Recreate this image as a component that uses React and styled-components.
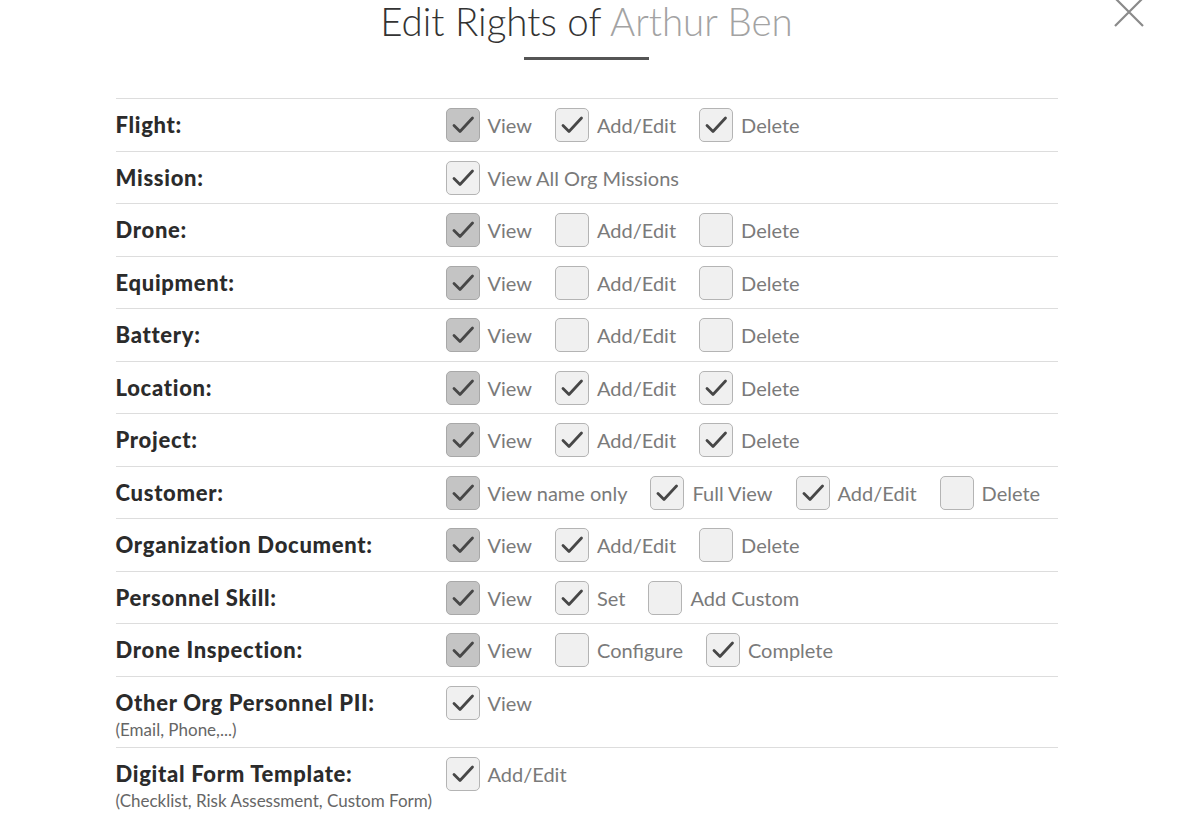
import React, {useLayoutEffect} from 'react';
import styled, {createGlobalStyle} from 'styled-components';

const GlobalStyle = createGlobalStyle`
	html, body {
		margin: 0;
		padding: 0;
		background: #fff;
		font-family: Lato, "Open Sans", sans-serif;
	}
`

const rights = [
	{label: 'Flight:', options: [['View', 'locked'], ['Add/Edit', 'on'], ['Delete', 'on']]},
	{label: 'Mission:', options: [['View All Org Missions', 'on']]},
	{label: 'Drone:', options: [['View', 'locked'], ['Add/Edit', 'off'], ['Delete', 'off']]},
	{label: 'Equipment:', options: [['View', 'locked'], ['Add/Edit', 'off'], ['Delete', 'off']]},
	{label: 'Battery:', options: [['View', 'locked'], ['Add/Edit', 'off'], ['Delete', 'off']]},
	{label: 'Location:', options: [['View', 'locked'], ['Add/Edit', 'on'], ['Delete', 'on']]},
	{label: 'Project:', options: [['View', 'locked'], ['Add/Edit', 'on'], ['Delete', 'on']]},
	{label: 'Customer:', options: [['View name only', 'locked'], ['Full View', 'on'], ['Add/Edit', 'on'], ['Delete', 'off']]},
	{label: 'Organization Document:', options: [['View', 'locked'], ['Add/Edit', 'on'], ['Delete', 'off']]},
	{label: 'Personnel Skill:', options: [['View', 'locked'], ['Set', 'on'], ['Add Custom', 'off']]},
	{label: 'Drone Inspection:', options: [['View', 'locked'], ['Configure', 'off'], ['Complete', 'on']]},
	{label: 'Other Org Personnel PII:', note: '(Email, Phone,...)', options: [['View', 'on']]},
	{label: 'Digital Form Template:', note: '(Checklist, Risk Assessment, Custom Form)', options: [['Add/Edit', 'on']]},
]

function Check({state}) {
	return (
		<Box state={state}>
			{state !== 'off' && (
				<svg width="28" height="28" viewBox="0 0 28 28">
					<path d="M5 14.5 L11 20.5 L23.5 7" fill="none" stroke="#474747" strokeWidth="2.8" strokeLinecap="round" strokeLinejoin="round" />
				</svg>
			)}
		</Box>
	)
}

function App() {
	useLayoutEffect(() => {
		window.scrollTo(0, 21);
	}, []);

	return (
		<Page>
			<GlobalStyle />
			<Close aria-label="close">
				<svg width="32" height="32" viewBox="0 0 32 32">
					<path d="M2 2 L30 30 M30 2 L2 30" stroke="#8a8a8a" strokeWidth="2.2" />
				</svg>
			</Close>
			<Title>Edit Rights of <Name>Arthur Ben</Name></Title>
			<Underline />
			<Table>
				{rights.map((r) => (
					<Row key={r.label}>
						<LabelCol>
							<Label>{r.label}</Label>
							{r.note && <Note>{r.note}</Note>}
						</LabelCol>
						<Options>
							{r.options.map(([text, state]) => (
								<Option key={text}>
									<Check state={state} />
									<span>{text}</span>
								</Option>
							))}
						</Options>
					</Row>
				))}
			</Table>
		</Page>
	)
}

export default App

const Page = styled.div`
	position: relative;
	min-height: 1061px;
	box-sizing: border-box;
	padding: 19px 21px 0 0;
	display: flex;
	flex-direction: column;
	align-items: center;
`

const Close = styled.div`
	position: absolute;
	top: 17px;
	right: 49px;
	cursor: pointer;
	line-height: 0;
`

const Title = styled.h1`
	margin: 0;
	font-family: Lato, sans-serif;
	font-weight: 300;
	font-size: 38.5px;
	line-height: 46px;
	color: #333;
`

const Name = styled.span`
	color: #a3a3a3;
`

const Underline = styled.div`
	width: 125px;
	height: 3px;
	background: #555;
	margin-top: 13px;
	margin-bottom: 38px;
`

const Table = styled.div`
	width: 942px;
	border-top: 1px solid #ddd;
`

const Row = styled.div`
	display: flex;
	align-items: flex-start;
	border-bottom: 1px solid #ddd;
	padding: 9px 0 7.5px;
	min-height: 35px;

	&:last-child {
		border-bottom: none;
	}
`

const LabelCol = styled.div`
	width: 330px;
	flex-shrink: 0;
	padding-top: 3px;
`

const Label = styled.div`
	font-weight: 900;
	font-size: 22px;
	letter-spacing: 0.7px;
	line-height: 28px;
	color: #2b2b2b;
`

const Note = styled.div`
	font-size: 17px;
	line-height: 20px;
	margin-top: 3px;
	color: #666;
`

const Options = styled.div`
	display: flex;
	align-items: center;
	gap: 23px;
`

const Option = styled.label`
	display: flex;
	align-items: center;
	gap: 8px;
	font-size: 20px;
	color: #7a7a7a;
`

const Box = styled.div`
	width: 32px;
	height: 32px;
	border-radius: 5px;
	border: 1px solid ${p => p.state === 'locked' ? '#a8a8a8' : '#b4b4b4'};
	background: ${p => p.state === 'locked' ? '#c4c4c4' : '#f0f0f0'};
	display: flex;
	align-items: center;
	justify-content: center;
`
